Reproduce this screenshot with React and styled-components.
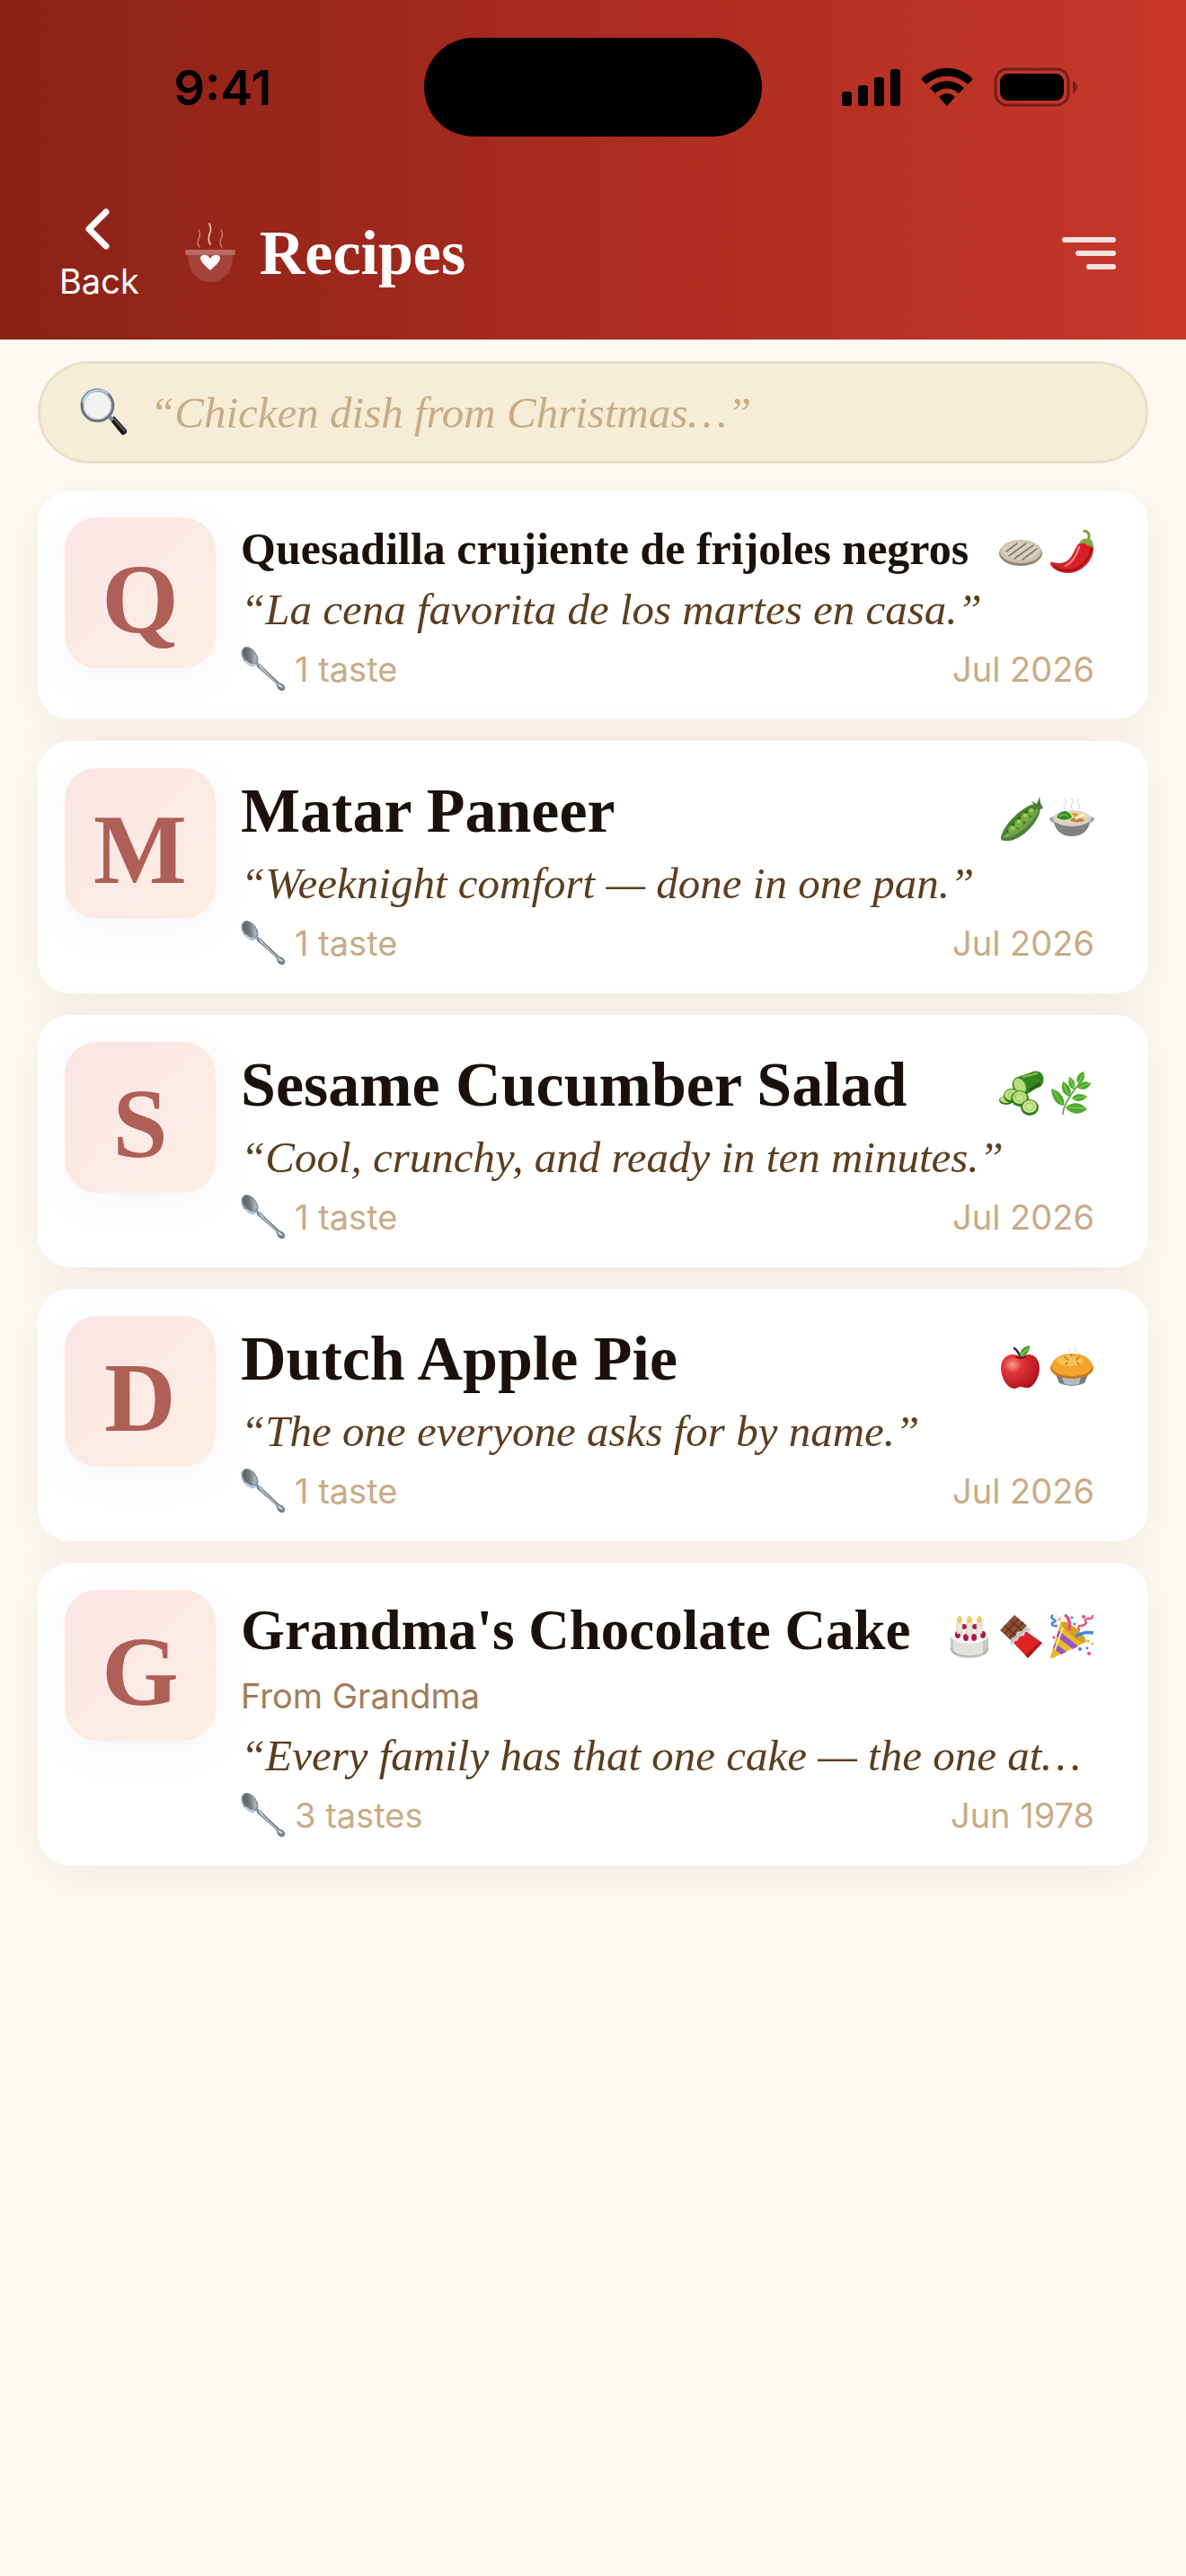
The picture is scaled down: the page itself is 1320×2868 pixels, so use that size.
import { useId, useState } from "react";
import styled, { createGlobalStyle } from "styled-components";

const recipes = [
    { id: 1, size: "small", title: "Quesadilla crujiente de frijoles negros", quote: "“La cena favorita de los martes en casa.”", tastes: "1 taste", date: "Jul 2026", icons: [Flatbread, Pepper] },
    { id: 2, size: "large", title: "Matar Paneer", quote: "“Weeknight comfort — done in one pan.”", tastes: "1 taste", date: "Jul 2026", icons: [PeaPod, Stew] },
    { id: 3, size: "large", title: "Sesame Cucumber Salad", quote: "“Cool, crunchy, and ready in ten minutes.”", tastes: "1 taste", date: "Jul 2026", icons: [Cucumber, Herb] },
    { id: 4, size: "large", title: "Dutch Apple Pie", quote: "“The one everyone asks for by name.”", tastes: "1 taste", date: "Jul 2026", icons: [Apple, Pie] },
    { id: 5, size: "medium", title: "Grandma's Chocolate Cake", from: "From Grandma", quote: "“Every family has that one cake — the one at…", tastes: "3 tastes", date: "Jun 1978", icons: [Cake, Chocolate, Popper] },
];

export default function App() {
    const [search, setSearch] = useState("");

    return (
        <Page>
            <GlobalStyle />
            <Header>
                <StatusBar>
                    <Time>9:41</Time>
                    <Island />
                    <StatusIcons>
                        <Signal />
                        <Wifi />
                        <Battery />
                    </StatusIcons>
                </StatusBar>
                <NavBar>
                    <BackButton type="button">
                        <svg width="36" height="54" viewBox="0 0 36 54" fill="none" stroke="#fff" strokeWidth="7" strokeLinecap="round" strokeLinejoin="round">
                            <path d="M26 8 L7 27 L26 46" />
                        </svg>
                        Back
                    </BackButton>
                    <Pot />
                    <h1>Recipes</h1>
                    <MenuButton type="button" aria-label="Sort recipes">
                        <svg width="60" height="36" viewBox="0 0 60 36" fill="#fff" fillOpacity="0.85">
                            <rect x="0" y="0" width="60" height="6" rx="3" />
                            <rect x="15" y="15" width="45" height="6" rx="3" />
                            <rect x="27" y="30" width="33" height="6" rx="3" />
                        </svg>
                    </MenuButton>
                </NavBar>
            </Header>

            <SearchBox>
                <Magnifier />
                <input
                    type="text"
                    aria-label="Search recipes"
                    placeholder="“Chicken dish from Christmas…”"
                    value={search}
                    onChange={(e) => setSearch(e.target.value)}
                />
            </SearchBox>

            <List>
                {recipes.map((r) => <RecipeCard key={r.id} recipe={r} />)}
            </List>
        </Page>
    );
}

function RecipeCard({ recipe }) {
    return (
        <Card>
            <Thumb>{recipe.title[0]}</Thumb>
            <Info>
                <TitleRow>
                    <Title $size={recipe.size}>{recipe.title}</Title>
                    <Icons>
                        {recipe.icons.map((Icon, i) => <Icon key={i} />)}
                    </Icons>
                </TitleRow>
                {recipe.from && <From>{recipe.from}</From>}
                <Quote>{recipe.quote}</Quote>
                <Meta>
                    <span><Spoon />{recipe.tastes}</span>
                    <span>{recipe.date}</span>
                </Meta>
            </Info>
        </Card>
    );
}

/* status bar icons */

function Signal() {
    return (
        <svg width="65" height="44" viewBox="0 0 65 44">
            <rect x="0" y="27" width="11" height="16" rx="3" />
            <rect x="18" y="20" width="11" height="23" rx="3" />
            <rect x="36" y="11" width="11" height="32" rx="3" />
            <rect x="54" y="2" width="11" height="41" rx="3" />
        </svg>
    );
}

function Wifi() {
    return (
        <svg width="58" height="44" viewBox="0 0 58 44">
            <path d="M1 14 Q0 13 1 12 C17 -3 41 -3 57 12 Q58 13 57 14 L53 18 Q52 19 51 18 C38 7 20 7 7 18 Q6 19 5 18 Z" />
            <path d="M11 24 Q10 23 11 22 C21 13 37 13 47 22 Q48 23 47 24 L43 28 Q42 29 41 28 C34 22 24 22 17 28 Q16 29 15 28 Z" />
            <path d="M21 34 Q20 33 21 32 C26 28 32 28 37 32 Q38 33 37 34 L30 42 Q29 43 28 42 Z" />
        </svg>
    );
}

function Battery() {
    return (
        <svg width="94" height="44" viewBox="0 0 94 44">
            <rect x="2" y="2" width="81" height="40" rx="13" fill="none" stroke="#000" strokeWidth="3" opacity="0.4" />
            <rect x="7" y="7" width="71" height="30" rx="9" />
            <path d="M88 15 Q93 17 93 22 Q93 27 88 29 Z" opacity="0.4" />
        </svg>
    );
}

/* app logo, steaming pot with a heart */

function Pot() {
    return (
        <svg width="58" height="68" viewBox="0 0 58 68">
            <g fill="none" stroke="#f3b9ac" strokeLinecap="round">
                <path d="M16 8 Q19 13 16 18 Q14 23 17 27" strokeWidth="1.4" opacity="0.6" />
                <path d="M28 1 Q31 7 28 13 Q26 19 29 24" strokeWidth="1.8" />
                <path d="M41 8 Q44 13 41 18 Q39 23 42 27" strokeWidth="1.4" opacity="0.6" />
            </g>
            <path d="M4 36 H54 C54 54 44 66 29 66 C14 66 4 54 4 36 Z" fill="#fff" opacity="0.14" />
            <rect x="1" y="30" width="56" height="6" rx="2" fill="#fff" opacity="0.32" />
            <path d="M29 53 C24 48 18 44 18 39 C18 35 26 34 29 40 C32 34 40 35 40 39 C40 44 34 48 29 53 Z" fill="#fff5f4" />
        </svg>
    );
}

/* food drawings, all on a 50 x 50 box */

function Emoji({ children, size = 50 }) {
    return <svg width={size} height={size} viewBox="0 0 50 50" aria-hidden="true">{children}</svg>;
}

function Magnifier() {
    return (
        <Emoji size={54}>
            <path d="M31 33 L35 29 L48 43 Q49 45 47 47 Q45 49 43 48 Z" fill="#16181b" />
            <path d="M35 32 L46 44" stroke="#555b63" strokeWidth="2" strokeLinecap="round" />
            <path d="M28 28 L34 33" stroke="#7f8893" strokeWidth="4" />
            <circle cx="18" cy="18" r="16" fill="#f2f2f0" stroke="#6d7681" strokeWidth="3" />
            <path d="M3 15 A16 16 0 0 1 29 6" fill="none" stroke="#b5d3ef" strokeWidth="2" />
            <circle cx="18" cy="18" r="14" fill="none" stroke="#c9d0d6" strokeWidth="1" />
        </Emoji>
    );
}

function Spoon() {
    const id = useId();
    return (
        <Emoji>
            <defs>
                <linearGradient id={id} x1="0" y1="0" x2="1" y2="1">
                    <stop offset="0" stopColor="#4f5153" />
                    <stop offset="0.5" stopColor="#77797b" />
                    <stop offset="1" stopColor="#d9dcdf" />
                </linearGradient>
            </defs>
            <path d="M17 18 C21 18 23 20 25 23 L43 40 C47 41 50 44 49 47 C48 50 43 50 41 46 C40 43 39 41 38 40 L21 25 C18 23 17 21 17 18 Z" fill="#76808c" />
            <path d="M19 19 C22 20 23 22 25 25 L41 41 C44 42 47 44 47 46 C46 48 44 47 43 45 L40 41 L22 24 Z" fill="#ccd6e0" />
            <ellipse cx="10" cy="11" rx="8" ry="12" transform="rotate(-35 10 11)" fill="#7f93a8" />
            <ellipse cx="10" cy="10" rx="6" ry="10" transform="rotate(-35 10 10)" fill={`url(#${id})`} />
            <path d="M5 16 Q11 22 18 20" stroke="#bcd6ee" strokeWidth="1.8" fill="none" />
            <path d="M43 45 Q44 47 47 46" stroke="#68717b" strokeWidth="1.2" fill="none" />
        </Emoji>
    );
}

function Flatbread() {
    return (
        <Emoji>
            <ellipse cx="24" cy="27" rx="24" ry="14" fill="#91856f" />
            <ellipse cx="24" cy="25" rx="23" ry="13" fill="#cdc4ae" />
            <ellipse cx="24" cy="24" rx="20" ry="10" fill="#d9d0bc" />
            <g stroke="#83786a" strokeWidth="1.6" strokeLinecap="round">
                <path d="M8 25 L20 16" />
                <path d="M11 30 L30 16" />
                <path d="M17 33 L38 18" />
                <path d="M26 34 L42 22" />
            </g>
        </Emoji>
    );
}

function Pepper() {
    return (
        <Emoji>
            <path d="M40 14 C44 9 43 5 40 4 L37 3 Q37 0 41 1 C47 4 46 9 44 14 Z" fill="#7d9f35" />
            <path d="M31 18 C27 24 25 36 13 38 C7 39 2 35 1 38 C1 43 11 50 23 49 C40 47 50 31 49 20 C47 12 36 12 31 18 Z" fill="#d42026" />
            <path d="M33 20 C30 30 26 37 18 41" stroke="#f47b76" strokeWidth="2.5" fill="none" strokeLinecap="round" />
            <path d="M5 41 C13 48 27 48 35 41 C42 36 46 27 47 21" stroke="#a01217" strokeWidth="2" fill="none" />
            <path d="M33 17 C34 12 38 10 42 11 C46 10 49 13 49 21 C46 19 45 17 43 19 C40 15 37 15 33 17 Z" fill="#7fae3e" />
        </Emoji>
    );
}

function PeaPod() {
    return (
        <Emoji>
            <path d="M40 11 L36 5 L42 8 L45 0 L46 7 L49 13 L45 14 Z" fill="#447a2e" />
            <path d="M2 47 C2 37 16 20 30 12 C37 7 46 7 46 13 C45 28 26 47 12 49 Q3 50 2 47 Z" fill="#4a8336" />
            <path d="M8 39 C13 31 24 19 34 13 Q41 11 40 15 C36 26 22 38 12 42 Z" fill="#2f6420" />
            <g fill="#79ad42">
                <circle cx="15" cy="37" r="5" />
                <circle cx="22" cy="30" r="5" />
                <circle cx="29" cy="23" r="5" />
                <circle cx="36" cy="17" r="4" />
            </g>
            <g fill="#a3cf62">
                <circle cx="15" cy="35" r="2" />
                <circle cx="22" cy="28" r="2" />
                <circle cx="29" cy="21" r="2" />
                <circle cx="36" cy="15" r="2" />
            </g>
            <path d="M8 44 C20 42 36 28 43 14" stroke="#6da04c" strokeWidth="4" fill="none" />
            <path d="M4 46 L11 39 L10 44 Z" fill="#86b55f" />
        </Emoji>
    );
}

function Stew() {
    return (
        <Emoji>
            <g fill="none" stroke="#dcdedf" strokeWidth="1.4" strokeLinecap="round">
                <path d="M17 3 Q20 6 17 9 Q15 11 18 14" />
                <path d="M25 2 Q28 5 25 8 Q23 11 26 14" />
                <path d="M32 3 Q30 6 33 9 Q35 11 32 14" />
            </g>
            <path d="M0 24 Q2 22 7 22 H43 Q48 22 50 24 Q50 28 45 29 C43 38 36 44 25 44 C14 44 7 38 5 29 Q0 28 0 24 Z" fill="#a3a5a7" />
            <path d="M5 28 Q25 37 45 28 C43 38 36 44 25 44 C14 44 7 38 5 28 Z" fill="#808284" />
            <ellipse cx="25" cy="24" rx="21" ry="9" fill="#d0d3d4" />
            <ellipse cx="25" cy="23" rx="18" ry="7" fill="#e8d8a4" />
            <path d="M8 23 Q10 17 18 16 Q24 19 25 23 Q19 27 12 25 Z" fill="#2f8a2d" />
            <path d="M11 22 Q16 18 21 22" stroke="#7dbb53" strokeWidth="1.5" fill="none" />
            <path d="M24 18 L32 19 L29 23 Z" fill="#e48637" />
            <path d="M22 26 Q30 20 40 26 Q31 31 22 26 Z" fill="#c38445" />
            <path d="M30 24 L38 20" stroke="#fff1cf" strokeWidth="3" strokeLinecap="round" />
        </Emoji>
    );
}

function Cucumber() {
    return (
        <Emoji>
            <path d="M18 8 L38 1 C46 -1 51 5 49 13 C48 17 45 19 41 20 L30 27 Z" fill="#35851f" />
            <path d="M27 7 L42 3" stroke="#77bd45" strokeWidth="2.5" strokeLinecap="round" />
            <path d="M33 22 L46 14" stroke="#1e5a14" strokeWidth="2.5" />
            <ellipse cx="23" cy="17" rx="8" ry="10" transform="rotate(-30 23 17)" fill="#3f8c2a" />
            <ellipse cx="23" cy="17" rx="6" ry="9" transform="rotate(-30 23 17)" fill="#b9dc7c" />
            <ellipse cx="8" cy="33" rx="8" ry="5" fill="#2f7a20" />
            <ellipse cx="8" cy="32" rx="7" ry="4" fill="#bfe07f" />
            <ellipse cx="14" cy="28" rx="9" ry="8" fill="#2f7a20" />
            <ellipse cx="14" cy="27" rx="8" ry="6" fill="#c3e385" />
            <ellipse cx="23" cy="31" rx="10" ry="9" fill="#2f7a20" />
            <ellipse cx="23" cy="30" rx="8" ry="7" fill="#c3e385" />
            <ellipse cx="34" cy="41" rx="10" ry="9" fill="#2f7a20" />
            <ellipse cx="34" cy="40" rx="8" ry="7" fill="#c9e78c" />
            <g fill="none" stroke="#98cb60" strokeWidth="1.2">
                <ellipse cx="14" cy="27" rx="4" ry="3" />
                <ellipse cx="23" cy="30" rx="5" ry="4" />
                <ellipse cx="34" cy="40" rx="5" ry="4" />
            </g>
        </Emoji>
    );
}

function Herb() {
    return (
        <Emoji>
            <path d="M15 49 C15 38 25 24 36 11" stroke="#5a9a32" strokeWidth="1.6" fill="none" />
            <g fill="#4eaa2e">
                <path d="M38 1 C29 4 29 11 33 15 C39 11 40 7 38 1 Z" />
                <path d="M46 14 C38 10 33 14 31 19 C38 23 44 20 46 14 Z" />
                <path d="M22 7 C20 14 22 19 27 21 C30 15 28 10 22 7 Z" />
                <path d="M15 12 C12 21 15 26 22 29 C26 23 23 16 15 12 Z" />
                <path d="M42 29 C35 24 28 26 25 31 C31 36 38 34 42 29 Z" />
                <path d="M2 20 C3 31 7 38 16 39 C18 30 11 22 2 20 Z" />
                <path d="M42 43 C34 34 24 35 18 41 C24 49 34 50 42 43 Z" />
            </g>
            <g fill="none" stroke="#9bd768" strokeWidth="1">
                <path d="M37 4 L33 13 M44 14 L33 19 M23 9 L27 19 M16 15 L21 27 M40 29 L27 31 M4 22 L14 37 M40 42 L21 41" />
            </g>
        </Emoji>
    );
}

function Apple() {
    const id = useId();
    return (
        <Emoji>
            <defs>
                <radialGradient id={id} cx="0.3" cy="0.3" r="0.8">
                    <stop offset="0" stopColor="#ff9a8b" />
                    <stop offset="0.3" stopColor="#e2353a" />
                    <stop offset="1" stopColor="#a90f1b" />
                </radialGradient>
            </defs>
            <path d="M24 14 C14 7 2 13 2 26 C2 37 9 48 16 49 C20 49 21 47 24 47 C27 47 29 49 33 48 C40 46 45 35 45 26 C45 13 34 7 24 14 Z" fill={`url(#${id})`} />
            <path d="M24 15 Q22 8 17 4" stroke="#4d2029" strokeWidth="2.5" fill="none" strokeLinecap="round" />
            <path d="M23 13 C23 5 28 2 34 1 C34 9 30 13 23 13 Z" fill="#48a12c" />
            <path d="M25 11 L32 4" stroke="#8fd05d" strokeWidth="1.2" />
            <path d="M18 13 Q24 17 30 13" stroke="#8d0a15" strokeWidth="2" fill="none" />
        </Emoji>
    );
}

function Pie() {
    return (
        <Emoji>
            <path d="M21 9 Q24 6 22 3 M28 9 Q31 6 28 2" stroke="#e6e6e6" strokeWidth="1.2" fill="none" />
            <path d="M6 31 H44 L39 43 Q25 49 11 43 Z" fill="#747c84" />
            <path d="M14 37 L17 44 Q25 46 33 44 L35 36 Z" fill="#b4bcc3" />
            <ellipse cx="25" cy="26" rx="24" ry="12" fill="#c97a16" />
            <path d="M2 24 C4 14 15 10 25 10 C36 10 46 14 48 24 C46 32 36 35 25 35 C14 35 4 32 2 24 Z" fill="#f2a42f" />
            <ellipse cx="23" cy="18" rx="15" ry="6" fill="#ffc95a" opacity="0.8" />
            <g stroke="#a9671a" strokeWidth="1.2" strokeLinecap="round" fill="none">
                <path d="M17 14 L21 17 M33 14 L30 17 M18 22 L20 20 M33 22 L31 20 M24 11 L25 13" />
            </g>
        </Emoji>
    );
}

function Cake() {
    return (
        <Emoji>
            <path d="M2 24 V40 C4 52 42 52 44 40 V24 Z" fill="#c9c8c4" />
            <path d="M5 30 V41 C9 48 32 49 38 45 V28 Z" fill="#e2e1de" />
            <ellipse cx="23" cy="24" rx="21" ry="9" fill="#f7f6f3" />
            <g fill="#b3154a">
                <circle cx="17" cy="14" r="3" />
                <circle cx="29" cy="14" r="3" />
                <ellipse cx="10" cy="23" rx="3" ry="4" />
                <ellipse cx="38" cy="23" rx="3" ry="4" />
                <ellipse cx="19" cy="26" rx="3" ry="4" />
                <ellipse cx="28" cy="26" rx="3" ry="4" />
            </g>
            <g fill="#efe8d6" stroke="#c5bda6" strokeWidth="0.6">
                <rect x="9" y="9" width="6" height="13" rx="1" />
                <rect x="20" y="9" width="6" height="15" rx="1" />
                <rect x="31" y="9" width="6" height="13" rx="1" />
            </g>
            <g fill="#ffd23c" stroke="#dd9d1c" strokeWidth="0.6">
                <path d="M12 2 Q17 8 12 9 Q7 8 12 2 Z" />
                <path d="M23 2 Q28 8 23 9 Q18 8 23 2 Z" />
                <path d="M34 2 Q39 8 34 9 Q29 8 34 2 Z" />
            </g>
            <path d="M2 38 C5 50 41 50 44 38" stroke="#a9a8a4" strokeWidth="1.2" fill="none" />
        </Emoji>
    );
}

function Chocolate() {
    return (
        <Emoji>
            <path d="M17 1 L31 13 L15 31 L1 18 Z" fill="#8d4f35" />
            <g stroke="#5e2f1e" strokeWidth="1.2">
                <path d="M12 7 L26 19 M6 13 L20 25 M22 5 L6 22 M27 9 L11 27" />
            </g>
            <path d="M27 17 L48 32 L32 49 L16 32 Z" fill="#dd2323" />
            <path d="M45 31 L48 32 L32 49 L29 46 Z" fill="#a91719" />
            <path d="M30 14 L36 17 L33 20 L29 20 L28 24 L23 25 L20 30 L17 30 L15 35 L12 33 L14 27 L18 25 L20 20 L25 19 Z" fill="#d0d3d5" />
            <path d="M31 16 L26 20 L22 23 L18 27 L14 31" stroke="#9ca1a4" strokeWidth="1" fill="none" />
        </Emoji>
    );
}

function Popper() {
    return (
        <Emoji>
            <path d="M1 48 L13 8 Q30 17 41 31 L4 49 Q1 50 1 48 Z" fill="#e9b92c" />
            <path d="M8 25 L10 18 L32 36 L26 39 Z M4 38 L6 32 L19 42 L13 45 Z" fill="#9a56c4" />
            <path d="M15 15 L6 40" stroke="#ffe98a" strokeWidth="2" />
            <ellipse cx="27" cy="20" rx="5" ry="17" transform="rotate(-50 27 20)" fill="#d5a023" />
            <path d="M17 1 Q24 5 22 18" stroke="#ed4c7b" strokeWidth="3.5" fill="none" />
            <path d="M29 25 Q38 19 49 21" stroke="#3f87dc" strokeWidth="3.5" fill="none" />
            <path d="M4 1 Q0 4 5 6 Q9 8 3 10 Q2 14 9 13" stroke="#3f87dc" strokeWidth="2.5" fill="none" />
            <path d="M48 1 Q49 6 42 5 Q38 6 41 10 Q38 14 33 13 Q31 16 34 18" stroke="#e84f83" strokeWidth="2.2" fill="none" />
            <g fill="#ed4c7b"><circle cx="38" cy="3" r="2" /><circle cx="5" cy="26" r="1.6" /><circle cx="44" cy="44" r="2" /></g>
            <g fill="#3f87dc"><circle cx="25" cy="4" r="1.6" /><circle cx="28" cy="11" r="1.6" /><circle cx="34" cy="39" r="2" /><circle cx="42" cy="38" r="1.4" /></g>
            <g fill="#f2b233"><circle cx="11" cy="6" r="1.8" /><circle cx="43" cy="30" r="1.8" /><circle cx="48" cy="33" r="1.5" /></g>
        </Emoji>
    );
}

const GlobalStyle = createGlobalStyle`
    * {
        box-sizing: border-box;
        margin: 0;
        padding: 0;
    }
    body {
        background-color: #fefaf3;
    }
`;

const Page = styled.div`
    width: 100%;
    min-height: 100vh;
    padding-bottom: 60px;
    background-color: #fefaf3;
    font-family: 'Inter', 'Liberation Sans', sans-serif;
`;

const Header = styled.header`
    background: linear-gradient(90deg, #8b2216, #a92b20 50%, #c8382b);
`;

const StatusBar = styled.div`
    display: grid;
    grid-template-columns: 1fr 376px 1fr;
    align-items: center;
    padding-top: 42px;
`;

const Time = styled.span`
    padding-left: 24px;
    text-align: center;
    font-size: 54px;
    font-weight: 600;
    color: #000;
`;

const Island = styled.div`
    height: 110px;
    border-radius: 55px;
    background-color: #000;
`;

const StatusIcons = styled.div`
    display: flex;
    justify-content: center;
    gap: 23px;
    padding-right: 32px;
`;

const NavBar = styled.nav`
    display: flex;
    align-items: center;
    height: 226px;
    padding: 34px 78px 0 66px;
    h1 {
        margin-left: 26px;
        flex: 1;
        font-family: 'Liberation Serif', serif;
        font-size: 70px;
        font-weight: 700;
        line-height: 84px;
        color: #fff;
    }
`;

const BackButton = styled.button`
    display: flex;
    flex-direction: column;
    align-items: center;
    gap: 8px;
    margin-right: 50px;
    border: none;
    background: none;
    color: #fff;
    font-family: inherit;
    font-size: 38px;
    line-height: 46px;
    cursor: pointer;
`;

const MenuButton = styled.button`
    display: flex;
    border: none;
    background: none;
    cursor: pointer;
`;

const SearchBox = styled.div`
    display: flex;
    align-items: center;
    gap: 24px;
    height: 114px;
    margin: 24px 42px 30px;
    padding: 0 44px;
    border: 3px solid #ebdfc9;
    border-radius: 57px;
    background-color: #f5edd8;
    input {
        flex: 1;
        min-width: 0;
        border: none;
        outline: none;
        background: none;
        font-family: 'Liberation Serif', serif;
        font-size: 49px;
        font-style: italic;
        color: #5c3d1e;
    }
    input::placeholder {
        color: #c9ab86;
        opacity: 1;
    }
`;

const List = styled.main`
    display: flex;
    flex-direction: column;
    gap: 24px;
    padding: 0 42px;
`;

const Card = styled.article`
    display: flex;
    align-items: flex-start;
    gap: 28px;
    padding: 30px 60px 23px 30px;
    border-radius: 36px;
    background-color: #fff;
    box-shadow: 0 12px 60px rgba(92, 40, 30, 0.08);
`;

const Thumb = styled.div`
    display: flex;
    align-items: center;
    justify-content: center;
    flex-shrink: 0;
    width: 168px;
    height: 168px;
    padding-top: 14px;
    border-radius: 36px;
    background: linear-gradient(135deg, #fae5e5, #fdeee3);
    box-shadow: 0 12px 48px rgba(60, 40, 30, 0.05);
    font-family: 'Liberation Serif', serif;
    font-size: 110px;
    font-weight: 700;
    color: #ae5f57;
`;

const Info = styled.div`
    flex: 1;
    min-width: 0;
    display: flex;
    flex-direction: column;
    gap: 4px;
`;

const TitleRow = styled.div`
    display: flex;
    align-items: baseline;
    justify-content: space-between;
`;

const titleSizes = {
    small: "font-size: 50px; line-height: 70px;",
    medium: "font-size: 63px; line-height: 90px;",
    large: "font-size: 70px; line-height: 96px;",
};

const Title = styled.h2`
    font-family: 'Liberation Serif', serif;
    font-weight: 700;
    white-space: nowrap;
    color: #1c100b;
    ${(props) => titleSizes[props.$size]}
`;

const Icons = styled.span`
    flex-shrink: 0;
    line-height: 50px;
    font-size: 38px;
    svg {
        margin-left: 6px;
        vertical-align: -11px;
    }
`;

const From = styled.p`
    margin-bottom: 10px;
    font-size: 38px;
    line-height: 48px;
    color: #a07d5a;
`;

const Quote = styled.p`
    overflow: hidden;
    text-overflow: ellipsis;
    white-space: nowrap;
    font-family: 'Liberation Serif', serif;
    font-size: 49px;
    font-style: italic;
    line-height: 58px;
    color: #5c3d1e;
`;

const Meta = styled.div`
    display: flex;
    justify-content: space-between;
    font-size: 38px;
    line-height: 66px;
    color: #c9ab86;
    svg {
        margin-right: 10px;
        vertical-align: -11px;
    }
`;
